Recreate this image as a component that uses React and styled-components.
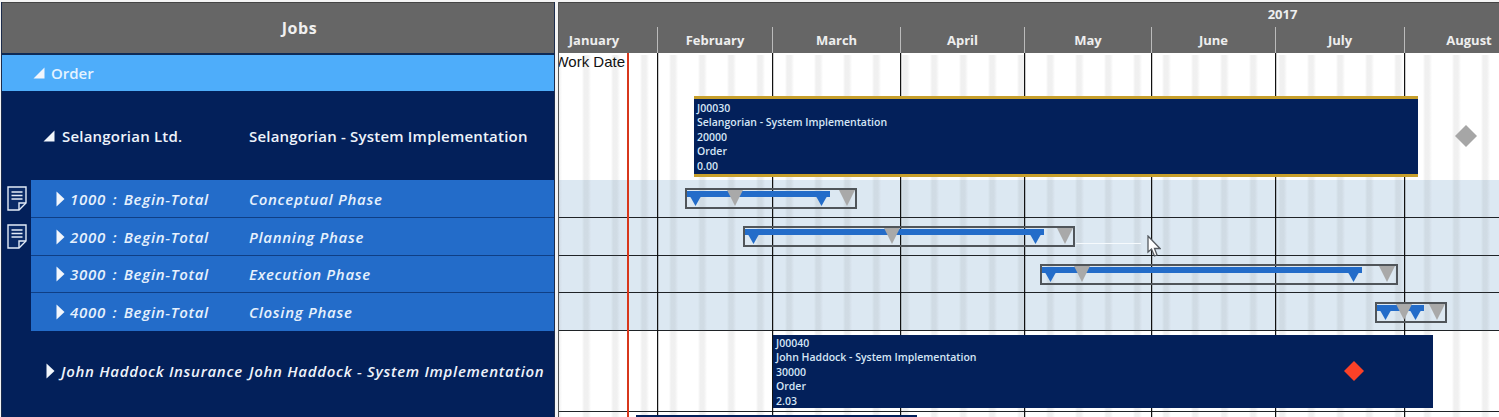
import React from 'react'
import styled, { createGlobalStyle } from 'styled-components'

const GlobalStyle = createGlobalStyle`
    html, body {
        margin: 0;
        padding: 0;
        background: #fff;
        font-family: "Open Sans", "Liberation Sans", sans-serif;
    }
`

const Shell = styled.div`
    display: flex;
    height: 417px;
    width: 1499px;
    padding: 2px 0 0 1px;
    box-sizing: border-box;
    overflow: hidden;
    background: #f4f4f4;
`

/* left job tree */
const Tree = styled.div`
    width: 554px;
    flex: none;
    display: flex;
    flex-direction: column;
    box-sizing: border-box;
    background: #03205a;
    border-left: 1px solid #1c2c4c;
    border-right: 1px solid #1c2c4c;
`

const TreeHeader = styled.div`
    height: 53px;
    flex: none;
    display: flex;
    align-items: center;
    justify-content: center;
    padding-left: 43px;
    box-sizing: border-box;
    background: #666;
    border-top: 1px solid #444;
    border-bottom: 2px solid #0e2a55;
    color: #f0f0f0;
    font-size: 16px;
    font-weight: 700;
    letter-spacing: 0.6px;
`

const GroupRow = styled.div`
    height: 36px;
    flex: none;
    display: flex;
    align-items: center;
    gap: 6px;
    padding-left: 31px;
    background: #4eadfa;
    color: #e4f3ff;
    font-size: 15px;
    font-weight: 600;
`

const JobRow = styled.div`
    height: ${props => props.$height}px;
    flex: none;
    display: grid;
    grid-template-columns: 247px 1fr;
    align-items: center;
    box-sizing: border-box;
    padding-bottom: ${props => props.$italic ? 2 : 0}px;
    color: #eef3fa;
    font-size: 15px;
    font-weight: 600;
    font-style: ${props => props.$italic ? 'italic' : 'normal'};
    letter-spacing: ${props => props.$italic ? 0.7 : 0.2}px;
    white-space: nowrap;
`

const NameCell = styled.div`
    display: flex;
    align-items: center;
    gap: ${props => props.$gap}px;
    padding-left: ${props => props.$indent}px;
    word-spacing: ${props => props.$wordSpace || 0}px;
`

const PhaseLine = styled.div`
    height: ${props => props.$height}px;
    flex: none;
    display: flex;
`

const Gutter = styled.div`
    width: 29px;
    flex: none;
    display: flex;
    justify-content: center;
    padding-top: 6px;
    box-sizing: border-box;
`

const PhaseRow = styled.div`
    flex: 1;
    display: grid;
    grid-template-columns: 218px 1fr;
    align-items: center;
    box-sizing: border-box;
    background: #236cc9;
    border-bottom: ${props => props.$last ? 'none' : '1px solid #0f3f85'};
    color: #e6f1fd;
    font-size: 15px;
    font-weight: 600;
    font-style: italic;
    letter-spacing: 0.7px;
    white-space: nowrap;
`

/* right gantt chart */
const Gantt = styled.div`
    flex: 1;
    min-width: 0;
    margin-left: 3px;
    display: flex;
    flex-direction: column;
    position: relative;
    overflow: hidden;
    border-left: 1px solid #555;
    background: #fff;
`

const TimeHeader = styled.div`
    height: 51px;
    flex: none;
    display: flex;
    flex-direction: column;
    background: #666;
    border-top: 1px solid #444;
    box-sizing: border-box;
    color: #eee;
    font-size: 13px;
    font-weight: 700;
`

const YearRow = styled.div`
    height: 24px;
    flex: none;
    padding-left: 507px;
    text-align: center;
    line-height: 23px;
`

const MonthRow = styled.div`
    flex: 1;
    display: flex;
`

const MonthCell = styled.div`
    width: ${props => props.$width}px;
    flex: none;
    box-sizing: border-box;
    padding: 0 ${props => props.$padRight}px 0 ${props => props.$padLeft}px;
    text-align: center;
    line-height: 26px;
    border-right: ${props => props.$last ? 'none' : '1px solid #bbb'};
`

const Body = styled.div`
    flex: 1;
    position: relative;
    display: flex;
    flex-direction: column;
`

const ChartRow = styled.div`
    height: ${props => props.$height}px;
    flex: none;
    position: relative;
    box-sizing: border-box;
    background: ${props => props.$shaded ? '#dce8f2' : '#fff'};
    border-bottom: ${props => props.$line ? '1px solid #1f2327' : 'none'};
`

const Stripes = styled.div`
    position: absolute;
    inset: 2px 0 0 0;
    z-index: 1;
    background-image: linear-gradient(90deg, rgba(90, 90, 90, 0) 0, rgba(90, 90, 90, 0.09) 2px, rgba(90, 90, 90, 0.09) 6px, rgba(90, 90, 90, 0) 9px);
    background-size: 29px 100%;
    background-position: 23px 0;
`

const MonthLines = styled.div`
    position: absolute;
    inset: 0;
    z-index: 1;
    display: flex;
`

const MonthLine = styled.div`
    width: ${props => props.$width}px;
    flex: none;
    box-sizing: border-box;
    border-right: ${props => props.$last ? 'none' : '1px solid #111'};
    box-shadow: ${props => props.$last ? 'none' : '1px 0 0 rgba(0, 0, 0, 0.2)'};
`

const WorkLine = styled.div`
    position: absolute;
    top: 0;
    bottom: 0;
    left: 68px;
    width: 2px;
    z-index: 2;
    background: #d8371c;
`

const WorkDate = styled.div`
    position: absolute;
    top: 0;
    left: 66px;
    z-index: 2;
    transform: translateX(-100%);
    font-family: "Liberation Sans", Arial, sans-serif;
    font-size: 15px;
    line-height: 17px;
    color: #111;
    white-space: nowrap;
`

const JobBar = styled.div`
    position: absolute;
    z-index: 3;
    left: ${props => props.$left}px;
    top: ${props => props.$top}px;
    width: ${props => props.$width}px;
    height: ${props => props.$height}px;
    box-sizing: border-box;
    padding: ${props => props.$gold ? 2 : 1}px 3px 0;
    background: #03205a;
    border-top: ${props => props.$gold ? '3px solid #c79f2b' : 'none'};
    border-bottom: ${props => props.$gold ? '3px solid #c79f2b' : 'none'};
    color: #d6e6f6;
    font-size: 10.5px;
    font-weight: 600;
    line-height: 14.4px;
    white-space: nowrap;
`

const Diamond = styled.div`
    position: absolute;
    z-index: 4;
    left: ${props => props.$left}px;
    top: ${props => props.$top}px;
    width: ${props => props.$size}px;
    height: ${props => props.$size}px;
    background: ${props => props.$color};
    clip-path: polygon(50% 0, 100% 50%, 50% 100%, 0 50%);
`

const PhaseBox = styled.div`
    position: absolute;
    z-index: 3;
    left: ${props => props.$left}px;
    top: ${props => props.$top}px;
    width: ${props => props.$width}px;
    height: 21px;
    box-sizing: border-box;
    border: 2px solid #50555a;
`

const SummaryBar = styled.div`
    position: absolute;
    left: ${props => props.$left}px;
    top: 1px;
    width: ${props => props.$width}px;
    height: 6px;
    background: #236cc9;
    &::before, &::after {
        content: '';
        position: absolute;
        top: 0;
        width: 17px;
        height: 15px;
        background: #236cc9;
        clip-path: polygon(0 0, 100% 0, 50% 100%);
    }
    &::before { left: 0; }
    &::after { right: 0; }
`

const Marker = styled.div`
    position: absolute;
    left: ${props => props.$center - 8}px;
    top: 0;
    width: 16px;
    height: 16px;
    background: #a9a9a9;
    clip-path: polygon(0 0, 100% 0, 50% 100%);
`

const FootBar = styled.div`
    position: absolute;
    z-index: 3;
    left: 77px;
    top: 3px;
    width: 281px;
    height: 3px;
    background: #03205a;
`

const Glare = styled.div`
    position: absolute;
    z-index: 3;
    left: 517px;
    top: 25px;
    width: 65px;
    height: 1px;
    background: #f6fafd;
`

const Pointer = styled.svg`
    position: absolute;
    z-index: 5;
    left: 588px;
    top: 17px;
`

const CaretOpen = () => (
    <svg width="12" height="12" viewBox="0 0 12 12"><path d="M11.5 0.5V11.5H0.5Z" fill="#f2f6fc" /></svg>
)

const CaretClosed = () => (
    <svg width="9" height="16" viewBox="0 0 9 16"><path d="M0.5 0.5L8.5 8L0.5 15.5Z" fill="#f2f6fc" /></svg>
)

const NoteIcon = () => (
    <svg width="20" height="25" viewBox="0 0 20 25" fill="none" stroke="#e3ebf7" strokeWidth="1.4">
        <path d="M1 1H19V17L12 24H1Z" fill="#0a2a66" />
        <path d="M19 17H12V24" />
        <path d="M4.5 6H15.5M4.5 9.5H15.5M4.5 13H15.5" strokeWidth="1.6" />
    </svg>
)

const months = [
    { name: 'January', width: 99, padRight: 28, padLeft: 0 },
    { name: 'February', width: 115, padRight: 0, padLeft: 0 },
    { name: 'March', width: 128, padRight: 0, padLeft: 0 },
    { name: 'April', width: 124, padRight: 0, padLeft: 0 },
    { name: 'May', width: 127, padRight: 0, padLeft: 0 },
    { name: 'June', width: 124, padRight: 0, padLeft: 0 },
    { name: 'July', width: 129, padRight: 0, padLeft: 0 },
    { name: 'August', width: 95, padRight: 0, padLeft: 33 }
]

const phases = [
    {
        code: '1000 : Begin-Total', title: 'Conceptual Phase', height: 38, note: true,
        box: { left: 126, width: 172, top: 8 }, bar: { left: 0, width: 143 }, markers: [48, 160]
    },
    {
        code: '2000 : Begin-Total', title: 'Planning Phase', height: 38, note: true,
        box: { left: 184, width: 332, top: 8 }, bar: { left: 0, width: 299 }, markers: [147, 320]
    },
    {
        code: '3000 : Begin-Total', title: 'Execution Phase', height: 37,
        box: { left: 481, width: 358, top: 8 }, bar: { left: 0, width: 320 }, markers: [40, 345]
    },
    {
        code: '4000 : Begin-Total', title: 'Closing Phase', height: 38,
        box: { left: 816, width: 72, top: 9 }, bar: { left: 0, width: 47 }, markers: [27, 60]
    }
]

function App() {
    return (
        <Shell>
            <GlobalStyle />
            <Tree>
                <TreeHeader>Jobs</TreeHeader>
                <GroupRow><CaretOpen />Order</GroupRow>
                <JobRow $height={89}>
                    <NameCell $indent={41} $gap={7}><CaretOpen />Selangorian Ltd.</NameCell>
                    <span>Selangorian - System Implementation</span>
                </JobRow>
                {phases.map((phase, index) =>
                    <PhaseLine key={phase.code} $height={phase.height}>
                        <Gutter>{phase.note && <NoteIcon />}</Gutter>
                        <PhaseRow $last={index === phases.length - 1}>
                            <NameCell $indent={25} $gap={5} $wordSpace={2}><CaretClosed />{phase.code}</NameCell>
                            <span>{phase.title}</span>
                        </PhaseRow>
                    </PhaseLine>
                )}
                <JobRow $height={81} $italic>
                    <NameCell $indent={44} $gap={6}><CaretClosed />John Haddock Insurance</NameCell>
                    <span>John Haddock - System Implementation</span>
                </JobRow>
            </Tree>
            <Gantt>
                <TimeHeader>
                    <YearRow>2017</YearRow>
                    <MonthRow>
                        {months.map((month, index) =>
                            <MonthCell key={month.name} $width={month.width} $padRight={month.padRight} $padLeft={month.padLeft} $last={index === months.length - 1}>
                                {month.name}
                            </MonthCell>
                        )}
                    </MonthRow>
                </TimeHeader>
                <Body>
                    <ChartRow $height={38} />
                    <ChartRow $height={89}>
                        <JobBar $gold $left={135} $top={5} $width={724} $height={81}>
                            J00030<br />Selangorian - System Implementation<br />20000<br />Order<br />0.00
                        </JobBar>
                        <Diamond $color="#a6a6a6" $left={896} $top={34} $size={22} />
                    </ChartRow>
                    {phases.map((phase, index) =>
                        <ChartRow key={phase.code} $height={phase.height} $shaded $line>
                            <PhaseBox $left={phase.box.left} $top={phase.box.top} $width={phase.box.width}>
                                <SummaryBar $left={phase.bar.left} $width={phase.bar.width} />
                                {phase.markers.map(center => <Marker key={center} $center={center} />)}
                            </PhaseBox>
                            {index === 1 &&
                                <>
                                    <Glare />
                                    <Pointer width="14" height="22" viewBox="0 0 14 22">
                                        <path d="M1 1V17L4.5 14L7.5 21L10 20L7.5 13.5H13Z" fill="#fff" stroke="#555a60" strokeWidth="1.3" />
                                    </Pointer>
                                </>
                            }
                        </ChartRow>
                    )}
                    <ChartRow $height={81} $line>
                        <JobBar $left={214} $top={4} $width={660} $height={73}>
                            J00040<br />John Haddock - System Implementation<br />30000<br />Order<br />2.03
                        </JobBar>
                        <Diamond $color="#fb4127" $left={785} $top={30} $size={20} />
                    </ChartRow>
                    <ChartRow $height={10}>
                        <FootBar />
                    </ChartRow>
                    <Stripes />
                    <MonthLines>
                        {months.map((month, index) =>
                            <MonthLine key={month.name} $width={month.width} $last={index === months.length - 1} />
                        )}
                    </MonthLines>
                    <WorkLine />
                    <WorkDate>Work Date</WorkDate>
                </Body>
            </Gantt>
        </Shell>
    )
}

export default App
